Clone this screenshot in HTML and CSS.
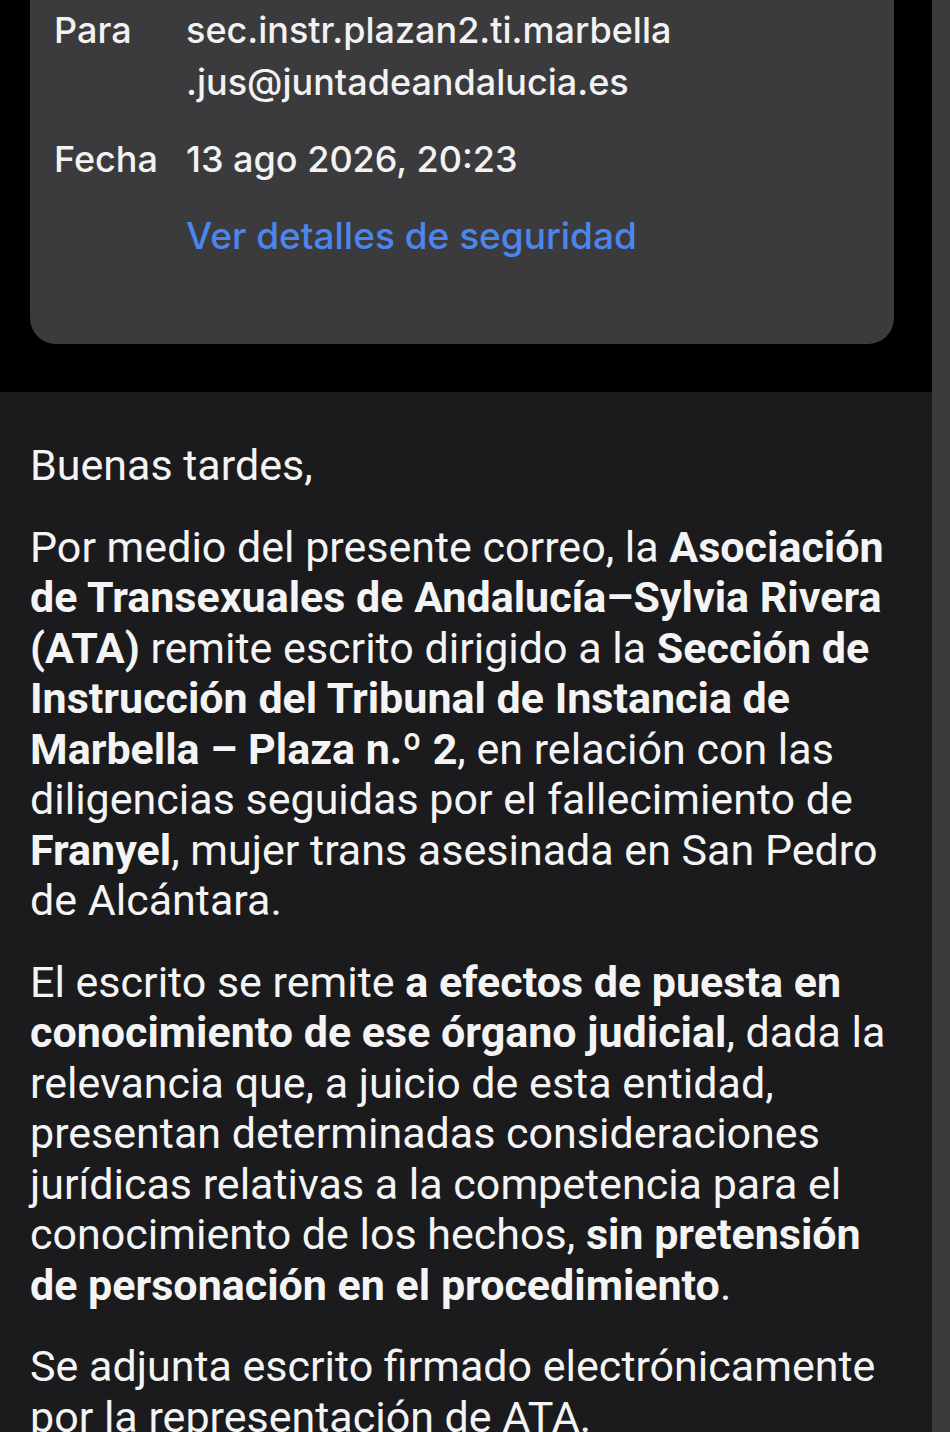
FILE: index.html
```html
<!DOCTYPE html>
<html lang="es">
<head>
<meta charset="utf-8">
<title>Correo</title>
<link rel="stylesheet" href="styles.css">
</head>
<body>
<div class="screen">
  <div class="main">
    <div class="top">
      <div class="card">
        <div class="row">
          <div class="label">Para</div>
          <div class="value">sec.instr.plazan2.ti.marbella<br>.jus@juntadeandalucia.es</div>
        </div>
        <div class="row">
          <div class="label">Fecha</div>
          <div class="value">13 ago 2026, 20:23</div>
        </div>
        <div class="row">
          <div class="label"></div>
          <div class="value link">Ver detalles de seguridad</div>
        </div>
      </div>
    </div>
    <div class="body">
      <p>Buenas tardes,</p>
      <p>Por medio del presente correo, la <b>Asociación de Transexuales de Andalucía–Sylvia Rivera (ATA)</b> remite escrito dirigido a la <b>Sección de Instrucción del Tribunal de Instancia de Marbella – Plaza n.º 2</b>, en relación con las diligencias seguidas por el fallecimiento de <b>Franyel</b>, mujer trans asesinada en San Pedro de Alcántara.</p>
      <p>El escrito se remite <b>a efectos de puesta en conocimiento de ese órgano judicial</b>, dada la relevancia que, a juicio de esta entidad, presentan determinadas consideraciones jurídicas relativas a la competencia para el conocimiento de los hechos, <b>sin pretensión de personación en el procedimiento</b>.</p>
      <p>Se adjunta escrito firmado electrónicamente por la representación de ATA.</p>
    </div>
  </div>
  <div class="scrollbar"></div>
</div>
</body>
</html>
```
FILE: styles.css
```css
html, body {
  margin: 0;
  padding: 0;
  height: 1432px;
  overflow: hidden;
  background: #000;
}
.screen {
  display: flex;
  width: 950px;
  height: 1432px;
}
.main {
  width: 932px;
  display: flex;
  flex-direction: column;
}
.scrollbar {
  width: 18px;
  background: #3b3b3d;
}
.top {
  background: #000;
  padding: 0 38px 48px 30px;
}
.card {
  background: #3b3b3d;
  border-radius: 0 0 26px 26px;
  padding: 4px 20px 82px 24px;
  display: flex;
  flex-direction: column;
  gap: 25px;
  font-family: Inter, "Noto Sans", sans-serif;
  font-size: 36px;
  font-weight: 500;
  line-height: 52px;
  color: #f2f2f2;
}
.row {
  display: flex;
}
.label {
  width: 132px;
  flex: none;
}
.link {
  color: #4b86ee;
  font-size: 37px;
}
.body {
  flex: 1;
  background: #1b1b1d;
  padding: 48px 28px 0 30px;
  font-family: Roboto, "Liberation Sans", sans-serif;
  font-size: 43px;
  line-height: 50.5px;
  color: #f4f4f4;
}
.body p {
  margin: 0 0 31px;
}
.body b {
  font-weight: 700;
}
```
